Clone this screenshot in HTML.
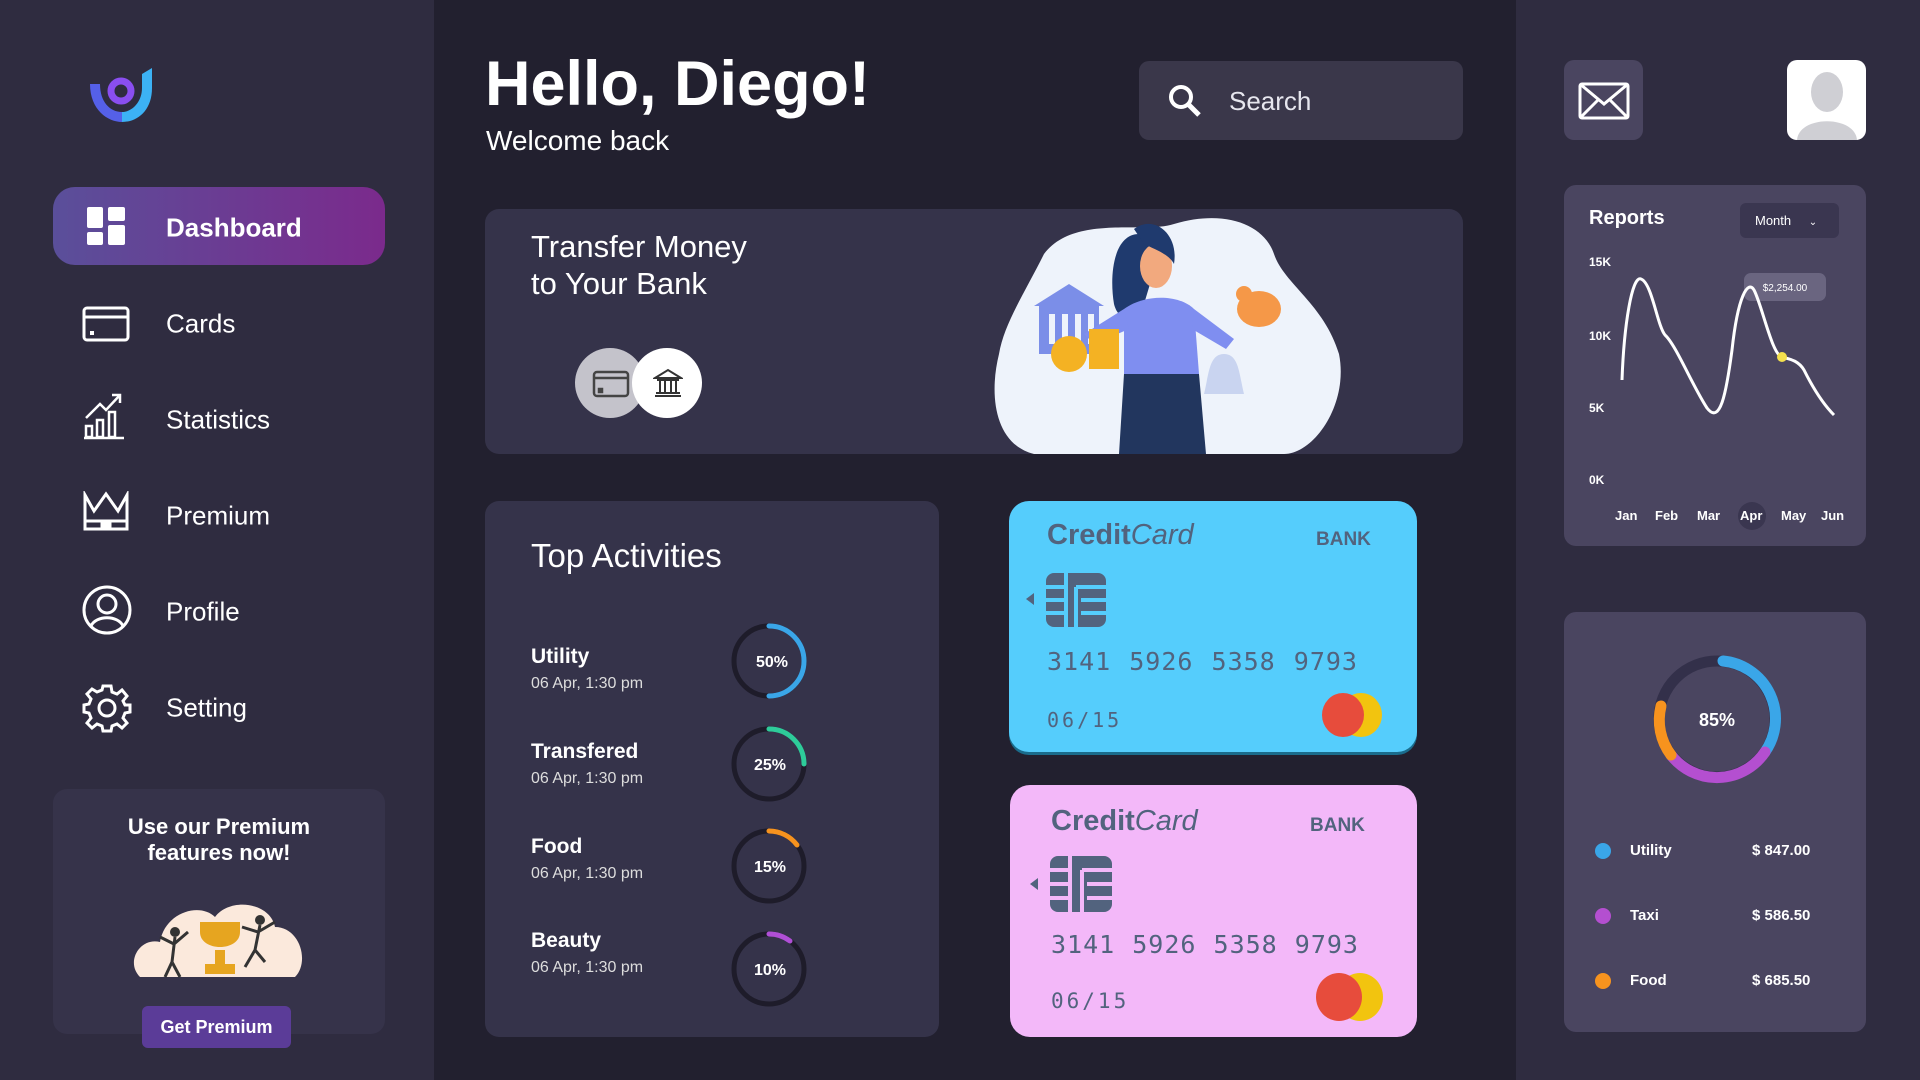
<!DOCTYPE html>
<html><head><meta charset="utf-8"><style>
*{margin:0;padding:0;box-sizing:border-box}
body{width:1920px;height:1080px;background:#22202f;font-family:"Liberation Sans",sans-serif;color:#fff;position:relative;overflow:hidden}
.a{position:absolute}
.side{left:0;top:0;width:434px;height:1080px;background:#2f2c40}
.right{left:1516px;top:0;width:404px;height:1080px;background:#2f2c40}
.nav{left:166px;font-size:26px;color:#fff;transform:translateY(-50%)}
.ic{left:82px;transform:translateY(-50%)}
.panel{background:#35334a;border-radius:14px}
.mono{font-family:"DejaVu Sans Mono","Liberation Mono",monospace;letter-spacing:1px}
</style></head><body>
<div class="a side"></div>
<div class="a right"></div>

<svg class="a" style="left:86px;top:66px" width="70" height="58" viewBox="0 0 70 58">
<path d="M4 18 C4 44 22 56 36 56 L36 46 C24 46 14 36 14 18 Z" fill="#5560e8"/>
<path d="M36 56 C52 56 66 44 66 22 L66 2 L56 8 L56 22 C56 36 46 46 36 46 Z" fill="#3cb2f5"/>
<circle cx="35" cy="25" r="10" fill="none" stroke="#8a4ef0" stroke-width="7"/>
</svg>

<div class="a" style="left:53px;top:187px;width:332px;height:78px;border-radius:22px;background:linear-gradient(90deg,#5a4f9a,#7b2a8c)"></div>
<svg class="a" style="left:87px;top:207px" width="38" height="38"><rect x="0" y="0" width="16" height="21" rx="2" fill="#fff"/><rect x="21" y="0" width="17" height="14" rx="2" fill="#fff"/><rect x="0" y="25" width="16" height="13" rx="2" fill="#fff"/><rect x="21" y="18" width="17" height="20" rx="2" fill="#fff"/></svg>
<div class="a nav" style="top:228px;font-weight:bold">Dashboard</div>

<svg class="a ic" style="top:324px" width="48" height="36"><rect x="2" y="2" width="44" height="32" rx="3" fill="none" stroke="#fff" stroke-width="3"/><line x1="2" y1="11" x2="46" y2="11" stroke="#fff" stroke-width="3"/><rect x="8" y="25" width="4" height="4" fill="#fff"/></svg>
<div class="a nav" style="top:324px">Cards</div>

<svg class="a ic" style="top:416px" width="44" height="48" fill="none" stroke="#fff" stroke-width="2.5"><path d="M2 46 H42"/><rect x="4" y="34" width="6" height="11"/><rect x="15" y="28" width="6" height="17"/><rect x="27" y="20" width="6" height="25"/><path d="M4 26 L18 12 L24 18 L38 3 M30 3 H38 V11"/></svg>
<div class="a nav" style="top:420px">Statistics</div>

<svg class="a ic" style="top:512px" width="48" height="42" fill="none" stroke="#fff" stroke-width="3"><path d="M3 4 L12 20 L24 3 L36 20 L45 4 V38 H3 Z"/><path d="M3 30 H45"/><rect x="20" y="33" width="8" height="3"/></svg>
<div class="a nav" style="top:516px">Premium</div>

<svg class="a ic" style="top:610px" width="50" height="50" fill="none" stroke="#fff" stroke-width="3"><circle cx="25" cy="25" r="23"/><circle cx="25" cy="19" r="9"/><path d="M9 41 C14 30 36 30 41 41"/></svg>
<div class="a nav" style="top:612px">Profile</div>

<svg class="a ic" style="top:708px" width="50" height="50" viewBox="0 0 50 50" fill="none" stroke="#fff" stroke-width="3"><circle cx="25" cy="25" r="8"/><path d="M21 3 H29 L30 9 L35 11 L40 7 L45 13 L41 18 L43 22 L48 22 V29 L43 30 L41 35 L45 40 L40 45 L35 41 L30 43 L29 48 H21 L20 43 L15 41 L10 45 L5 40 L9 35 L7 30 L2 29 V22 L7 21 L9 16 L5 11 L10 6 L15 9 L20 7 Z"/></svg>
<div class="a nav" style="top:708px">Setting</div>

<div class="a" style="left:53px;top:789px;width:332px;height:245px;background:#36334a;border-radius:14px"></div>
<div class="a" style="left:53px;top:814px;width:332px;text-align:center;font-size:22px;font-weight:bold;line-height:26px">Use our Premium<br>features now!</div>
<svg class="a" style="left:130px;top:882px" width="178" height="100"><path d="M10 95 C-5 80 10 55 30 60 C35 30 70 20 85 35 C100 15 140 20 145 45 C170 45 180 80 165 95 Z" fill="#fbe9dc"/><path d="M70 40 H110 V50 C110 70 70 70 70 50 Z" fill="#e6a520"/><rect x="85" y="68" width="10" height="14" fill="#e6a520"/><rect x="75" y="82" width="30" height="10" fill="#e6a520"/><circle cx="45" cy="50" r="5" fill="#333"/><path d="M45 55 L42 80 M42 80 L35 95 M42 80 L50 95 M44 62 L30 55 M44 62 L58 50" stroke="#333" stroke-width="3"/><circle cx="130" cy="38" r="5" fill="#333"/><path d="M130 43 L125 68 M125 68 L115 85 M125 68 L135 80 M128 50 L145 40 M128 50 L112 45" stroke="#333" stroke-width="3"/></svg>
<div class="a" style="left:142px;top:1006px;width:149px;height:42px;background:#5b3c98;border-radius:6px;text-align:center;line-height:42px;font-size:18px;font-weight:bold">Get Premium</div>

<div class="a" style="left:485px;top:48px;font-size:63px;font-weight:bold">Hello, Diego!</div>
<div class="a" style="left:486px;top:125px;font-size:28px">Welcome back</div>
<div class="a" style="left:1139px;top:61px;width:324px;height:79px;background:#3a374a;border-radius:10px"></div>
<svg class="a" style="left:1168px;top:84px" width="34" height="34" fill="none" stroke="#fff" stroke-width="4"><circle cx="13" cy="13" r="10"/><path d="M20 20 L31 31" stroke-width="5"/></svg>
<div class="a" style="left:1229px;top:86px;font-size:26px;color:#e6e6ee">Search</div>

<div class="a panel" style="left:485px;top:209px;width:978px;height:245px"></div>
<div class="a" style="left:531px;top:228px;font-size:31px;line-height:37px">Transfer Money<br>to Your Bank</div>
<div class="a" style="left:575px;top:348px;width:70px;height:70px;border-radius:50%;background:#c4c3cb"></div>
<svg class="a" style="left:592px;top:370px" width="38" height="28" fill="none" stroke="#444" stroke-width="2.5"><rect x="2" y="2" width="34" height="24" rx="3"/><line x1="2" y1="8" x2="36" y2="8"/><rect x="7" y="19" width="3" height="3" fill="#444"/></svg>
<div class="a" style="left:632px;top:348px;width:70px;height:70px;border-radius:50%;background:#fff"></div>
<svg class="a" style="left:653px;top:368px" width="30" height="30" fill="none" stroke="#333" stroke-width="2"><path d="M2 10 L15 2 L28 10 Z M4 12 H26 M7 13 V24 M12 13 V24 M18 13 V24 M23 13 V24 M3 25 H27 M2 28 H28"/></svg>
<svg class="a" style="left:994px;top:214px" width="351" height="240" viewBox="0 0 351 240">
<path d="M50 40 C80 0 150 20 180 10 C230 -5 270 10 280 40 C290 70 330 90 345 140 C355 190 320 240 290 240 L40 240 C0 230 -5 180 5 140 C10 110 30 80 50 40 Z" fill="#eef3fb"/>
<rect x="45" y="90" width="60" height="50" fill="#7b8ee8"/><path d="M40 92 L75 70 L110 92 Z" fill="#7b8ee8"/>
<g fill="#eef3fb"><rect x="55" y="100" width="6" height="30"/><rect x="68" y="100" width="6" height="30"/><rect x="81" y="100" width="6" height="30"/><rect x="94" y="100" width="6" height="30"/></g>
<path d="M145 20 C120 20 115 60 120 90 C125 110 145 110 150 90 L165 40 Z" fill="#1f3a6e"/>
<ellipse cx="162" cy="52" rx="16" ry="22" fill="#f2a97e"/>
<path d="M140 15 C160 0 185 20 180 50 C175 40 160 35 150 30 Z" fill="#1f3a6e"/>
<path d="M130 95 C150 80 185 80 200 95 L205 160 L130 160 Z" fill="#7f8ef0"/>
<path d="M130 95 L90 120 L100 130 L135 115 Z M200 95 L240 125 L232 135 L198 115 Z" fill="#7f8ef0"/>
<path d="M130 160 H205 L212 240 H125 Z" fill="#22365e"/>
<ellipse cx="265" cy="95" rx="22" ry="18" fill="#f59848"/><circle cx="250" cy="80" r="8" fill="#f59848"/>
<circle cx="75" cy="140" r="18" fill="#f4b223"/><rect x="95" y="115" width="30" height="40" fill="#f4b223"/>
<path d="M230 140 C215 140 215 160 210 180 L250 180 C245 160 245 140 230 140 Z" fill="#c9d4f0"/>
</svg>

<div class="a panel" style="left:485px;top:501px;width:454px;height:536px"></div>
<div class="a" style="left:531px;top:537px;font-size:33px">Top Activities</div>
<div class="a" style="left:531px;top:645px;font-size:21px;font-weight:bold">Utility</div>
<div class="a" style="left:531px;top:675px;font-size:16px;color:#ddd">06 Apr, 1:30 pm</div>
<div class="a" style="left:531px;top:740px;font-size:21px;font-weight:bold">Transfered</div>
<div class="a" style="left:531px;top:770px;font-size:16px;color:#ddd">06 Apr, 1:30 pm</div>
<div class="a" style="left:531px;top:835px;font-size:21px;font-weight:bold">Food</div>
<div class="a" style="left:531px;top:865px;font-size:16px;color:#ddd">06 Apr, 1:30 pm</div>
<div class="a" style="left:531px;top:929px;font-size:21px;font-weight:bold">Beauty</div>
<div class="a" style="left:531px;top:959px;font-size:16px;color:#ddd">06 Apr, 1:30 pm</div>
<svg class="a" style="left:720px;top:615px" width="100" height="410" font-family="Liberation Sans" font-weight="bold" font-size="16" fill="#fff" text-anchor="middle">
<g fill="none" stroke-width="5" stroke-linecap="round">
<circle cx="49" cy="46" r="35" stroke="#1e1c2a"/><path d="M49 11 A35 35 0 0 1 49 81" stroke="#3aa6e8"/>
<circle cx="49" cy="149" r="35" stroke="#1e1c2a"/><path d="M49 114 A35 35 0 0 1 84 149" stroke="#2ecc9a"/>
<circle cx="49" cy="251" r="35" stroke="#1e1c2a"/><path d="M49 216 A35 35 0 0 1 77 230" stroke="#f7931e"/>
<circle cx="49" cy="354" r="35" stroke="#1e1c2a"/><path d="M49 319 A35 35 0 0 1 70 326" stroke="#b04fd6"/>
</g>
<text x="52" y="52">50%</text><text x="50" y="155">25%</text><text x="50" y="257">15%</text><text x="50" y="360">10%</text>
</svg>

<div class="a" style="left:1009px;top:501px;width:408px;height:251px;background:#55cdfc;border-radius:20px;box-shadow:0 3px 0 #1a6c8c"></div>
<div class="a" style="left:1047px;top:519px;font-size:29px;color:#52637e"><b>Credit</b><i>Card</i></div>
<div class="a" style="left:1316px;top:529px;font-size:19px;font-weight:bold;color:#52637e">BANK</div>
<svg class="a" style="left:1026px;top:573px" width="84" height="56"><path d="M0 26 L8 20 V32 Z" fill="#52637e"/><rect x="20" y="0" width="60" height="54" rx="8" fill="#52637e"/><g stroke="#55cdfc" stroke-width="4"><path d="M20 14 H40 M20 27 H40 M20 40 H40 M40 0 V54 M50 14 V54 M50 14 H80 M55 27 H80 M55 40 H80"/></g></svg>
<div class="a mono" style="left:1047px;top:647px;font-size:25px;color:#52637e;word-spacing:2px">3141 5926 5358 9793</div>
<div class="a mono" style="left:1047px;top:708px;font-size:20px;color:#52637e;letter-spacing:3px">06/15</div>
<div class="a" style="left:1340px;top:693px;width:42px;height:44px;border-radius:50%;background:#f2c40f"></div>
<div class="a" style="left:1322px;top:693px;width:42px;height:44px;border-radius:50%;background:#e74c3c"></div>

<div class="a" style="left:1010px;top:785px;width:407px;height:252px;background:#f3b8f9;border-radius:20px"></div>
<div class="a" style="left:1051px;top:805px;font-size:29px;color:#52637e"><b>Credit</b><i>Card</i></div>
<div class="a" style="left:1310px;top:815px;font-size:19px;font-weight:bold;color:#52637e">BANK</div>
<svg class="a" style="left:1030px;top:856px" width="86" height="58"><path d="M0 28 L8 22 V34 Z" fill="#52637e"/><rect x="20" y="0" width="62" height="56" rx="8" fill="#52637e"/><g stroke="#f3b8f9" stroke-width="4"><path d="M20 14 H40 M20 28 H40 M20 42 H40 M40 0 V56 M52 14 V56 M52 14 H82 M57 28 H82 M57 42 H82"/></g></svg>
<div class="a mono" style="left:1051px;top:930px;font-size:25px;color:#52637e;word-spacing:1px">3141 5926 5358 9793</div>
<div class="a mono" style="left:1051px;top:989px;font-size:21px;color:#52637e;letter-spacing:3px">06/15</div>
<div class="a" style="left:1337px;top:973px;width:46px;height:48px;border-radius:50%;background:#f2c40f"></div>
<div class="a" style="left:1316px;top:973px;width:46px;height:48px;border-radius:50%;background:#e74c3c"></div>

<div class="a" style="left:1564px;top:60px;width:79px;height:80px;background:#4a4560;border-radius:10px"></div>
<svg class="a" style="left:1578px;top:82px" width="52" height="38" fill="none" stroke="#fff" stroke-width="3"><rect x="2" y="2" width="48" height="34" rx="2"/><path d="M2 2 L26 22 L50 2 M2 36 L20 18 M50 36 L32 18"/></svg>
<div class="a" style="left:1787px;top:60px;width:79px;height:80px;background:#fff;border-radius:10px;overflow:hidden">
<svg width="79" height="80"><ellipse cx="40" cy="32" rx="16" ry="20" fill="#cfcfd4"/><path d="M10 80 C12 55 68 55 70 80 Z" fill="#cfcfd4"/></svg></div>

<div class="a" style="left:1564px;top:185px;width:302px;height:361px;background:#4a4560;border-radius:12px"></div>
<div class="a" style="left:1589px;top:207px;font-size:20px;font-weight:bold">Reports</div>
<div class="a" style="left:1740px;top:203px;width:99px;height:35px;background:#3a3650;border-radius:6px;font-size:13px;line-height:35px;padding-left:15px">Month <span style="margin-left:14px;font-size:10px">&#8964;</span></div>
<div class="a" style="left:1589px;top:256px;font-size:12px;font-weight:bold;line-height:12px">15K</div>
<div class="a" style="left:1589px;top:329px;font-size:12px;font-weight:bold">10K</div>
<div class="a" style="left:1589px;top:401px;font-size:12px;font-weight:bold">5K</div>
<div class="a" style="left:1589px;top:473px;font-size:12px;font-weight:bold">0K</div>
<div class="a" style="left:1738px;top:502px;width:28px;height:28px;border-radius:50%;background:#3a3650"></div>
<div class="a" style="left:1615px;top:508px;width:240px;font-size:13px;font-weight:bold">
<span class="a" style="left:0">Jan</span><span class="a" style="left:40px">Feb</span><span class="a" style="left:82px">Mar</span><span class="a" style="left:125px">Apr</span><span class="a" style="left:166px">May</span><span class="a" style="left:206px">Jun</span></div>
<svg class="a" style="left:1564px;top:185px" width="302" height="361">
<rect x="180" y="88" width="82" height="28" rx="7" fill="#6a6580"/>
<text x="221" y="106" font-size="10" fill="#fff" text-anchor="middle" font-family="Liberation Sans">$2,254.00</text>
<path d="M58 195 C60 140 68 90 77 94 C88 98 93 140 101 150 C112 160 128 200 143 223 C156 240 162 210 168 165 C174 110 184 95 190 105 C198 120 208 170 218 172 C225 174 234 175 240 185 C250 205 260 220 270 230" fill="none" stroke="#fff" stroke-width="3"/>
<circle cx="218" cy="172" r="5" fill="#f4e04d"/>
</svg>

<div class="a" style="left:1564px;top:612px;width:302px;height:420px;background:#4a4560;border-radius:12px"></div>
<svg class="a" style="left:1647px;top:649px" width="140" height="140" fill="none" stroke-width="11" stroke-linecap="round">
<circle cx="70" cy="70" r="58" stroke="#33304a"/>
<path d="M76 12 A58 58 0 0 1 118 103" stroke="#3aa6e8"/>
<path d="M118 103 A58 58 0 0 1 24 106" stroke="#b44fd0"/>
<path d="M24 106 A58 58 0 0 1 14 57" stroke="#f7931e"/>
<text x="70" y="77" fill="#fff" stroke="none" font-size="18" font-weight="bold" text-anchor="middle" font-family="Liberation Sans">85%</text>
</svg>
<div class="a" style="left:1595px;top:843px;width:16px;height:16px;border-radius:50%;background:#3aa6e8"></div>
<div class="a" style="left:1595px;top:908px;width:16px;height:16px;border-radius:50%;background:#b44fd0"></div>
<div class="a" style="left:1595px;top:973px;width:16px;height:16px;border-radius:50%;background:#f7931e"></div>
<div class="a" style="left:1630px;top:842px;font-size:15px;font-weight:bold">Utility</div>
<div class="a" style="left:1630px;top:907px;font-size:15px;font-weight:bold">Taxi</div>
<div class="a" style="left:1630px;top:972px;font-size:15px;font-weight:bold">Food</div>
<div class="a" style="left:1752px;top:842px;font-size:15px;font-weight:bold">$ 847.00</div>
<div class="a" style="left:1752px;top:907px;font-size:15px;font-weight:bold">$ 586.50</div>
<div class="a" style="left:1752px;top:972px;font-size:15px;font-weight:bold">$ 685.50</div>
</body></html>
